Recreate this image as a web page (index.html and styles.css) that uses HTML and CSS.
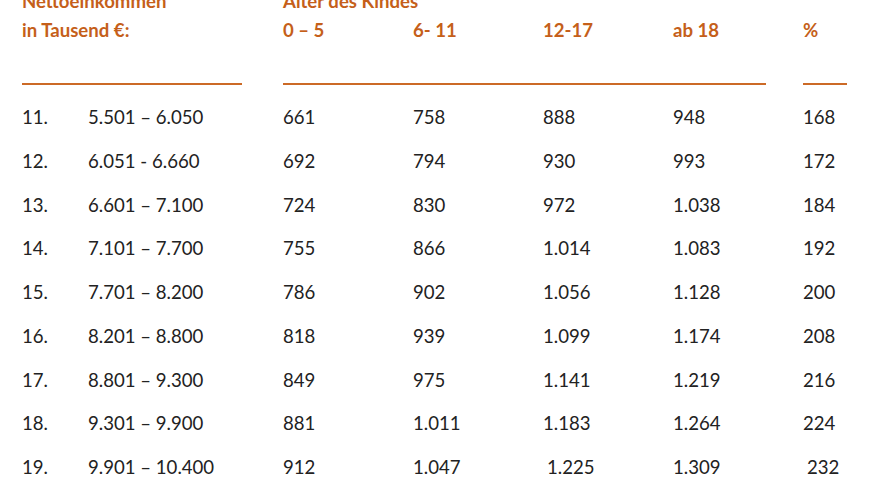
FILE: index.html
```html
<!DOCTYPE html>
<html lang="de">
<head>
<meta charset="utf-8">
<title>Düsseldorfer Tabelle</title>
<link rel="stylesheet" href="styles.css">
</head>
<body>
<div class="sheet">
  <div class="table">
    <div class="hd span-income">Nettoeinkommen</div>
    <div class="hd span-age">Alter des Kindes</div>

    <div class="hd span-income">in Tausend €:</div>
    <div class="hd">0 – 5</div>
    <div class="hd">6- 11</div>
    <div class="hd">12-17</div>
    <div class="hd">ab 18</div>
    <div class="hd">%</div>

    <div class="rule rule-income"></div>
    <div class="rule rule-age"></div>
    <div class="rule rule-pct"></div>

    <div class="c">11.</div><div class="c">5.501 – 6.050</div><div class="c">661</div><div class="c">758</div><div class="c">888</div><div class="c">948</div><div class="c">168</div>
    <div class="c">12.</div><div class="c">6.051 - 6.660</div><div class="c">692</div><div class="c">794</div><div class="c">930</div><div class="c">993</div><div class="c">172</div>
    <div class="c">13.</div><div class="c">6.601 – 7.100</div><div class="c">724</div><div class="c">830</div><div class="c">972</div><div class="c">1.038</div><div class="c">184</div>
    <div class="c">14.</div><div class="c">7.101 – 7.700</div><div class="c">755</div><div class="c">866</div><div class="c">1.014</div><div class="c">1.083</div><div class="c">192</div>
    <div class="c">15.</div><div class="c">7.701 – 8.200</div><div class="c">786</div><div class="c">902</div><div class="c">1.056</div><div class="c">1.128</div><div class="c">200</div>
    <div class="c">16.</div><div class="c">8.201 – 8.800</div><div class="c">818</div><div class="c">939</div><div class="c">1.099</div><div class="c">1.174</div><div class="c">208</div>
    <div class="c">17.</div><div class="c">8.801 – 9.300</div><div class="c">849</div><div class="c">975</div><div class="c">1.141</div><div class="c">1.219</div><div class="c">216</div>
    <div class="c">18.</div><div class="c">9.301 – 9.900</div><div class="c">881</div><div class="c">1.011</div><div class="c">1.183</div><div class="c">1.264</div><div class="c">224</div>
    <div class="c">19.</div><div class="c">9.901 – 10.400</div><div class="c">912</div><div class="c">1.047</div><div class="c indent">1.225</div><div class="c">1.309</div><div class="c indent">232</div>
  </div>
</div>
</body>
</html>
```

FILE: styles.css
```css
html, body {
  margin: 0;
  padding: 0;
  background: #ffffff;
  overflow: hidden;
}

.sheet {
  width: 880px;
  height: 480px;
  overflow: hidden;
  font-family: Lato, "Open Sans", "Liberation Sans", sans-serif;
  font-size: 18.6px;
  color: #222222;
}

.table {
  margin-top: -13px;
  padding-left: 22px;
  display: grid;
  grid-template-columns: 66px 195px 130px 130px 130px 130px 60px;
}

.hd {
  font-weight: 700;
  color: #c55f1a;
  line-height: 29px;
  white-space: nowrap;
}

.span-income {
  grid-column: 1 / 3;
}

.span-age {
  grid-column: 3 / 8;
}

.rule {
  height: 0;
  border-top: 2px solid #cc6a26;
  margin-top: 38px;
  margin-bottom: 11px;
}

.rule-income {
  grid-column: 1 / 3;
  margin-right: 41px;
}

.rule-age {
  grid-column: 3 / 7;
  margin-right: 37px;
}

.rule-pct {
  grid-column: 7 / 8;
  margin-right: 16px;
}

.c {
  line-height: 43.75px;
  white-space: nowrap;
}

.indent {
  padding-left: 4px;
}
```
